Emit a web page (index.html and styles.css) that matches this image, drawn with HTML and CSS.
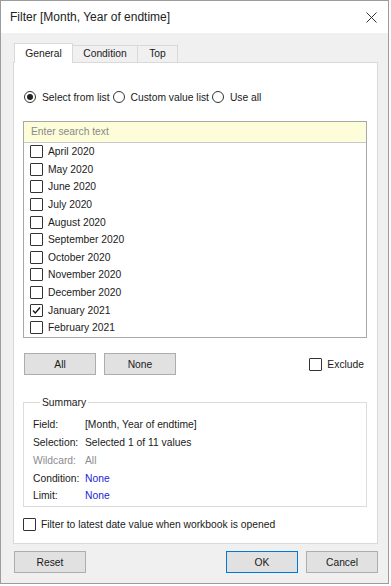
FILE: index.html
```html
<!DOCTYPE html>
<html lang="en">
<head>
	<meta charset="UTF-8">
	<title>Filter</title>
	<link rel="stylesheet" href="styles.css">
</head>
<body>
	<div class="window">
		<div class="titlebar">
			<span class="title">Filter [Month, Year of endtime]</span>
			<svg class="close" width="11" height="11" viewBox="0 0 11 11">
				<path d="M0.5 0.5 L10.5 10.5 M10.5 0.5 L0.5 10.5" stroke="#333" stroke-width="1" fill="none"/>
			</svg>
		</div>
		<div class="content">
			<div class="tabs">
				<div class="tab active">General</div>
				<div class="tab">Condition</div>
				<div class="tab">Top</div>
			</div>
			<div class="panel">
				<div class="radios">
					<label class="radio"><span class="dot on"></span>Select from list</label>
					<label class="radio"><span class="dot"></span>Custom value list</label>
					<label class="radio"><span class="dot"></span>Use all</label>
				</div>

				<div class="listbox">
					<div class="search">Enter search text</div>
					<ul class="items">
						<li><span class="check"></span>April 2020</li>
						<li><span class="check"></span>May 2020</li>
						<li><span class="check"></span>June 2020</li>
						<li><span class="check"></span>July 2020</li>
						<li><span class="check"></span>August 2020</li>
						<li><span class="check"></span>September 2020</li>
						<li><span class="check"></span>October 2020</li>
						<li><span class="check"></span>November 2020</li>
						<li><span class="check"></span>December 2020</li>
						<li><span class="check on"><svg width="11" height="11" viewBox="0 0 11 11"><path d="M2 5.5 L4.3 8 L9 2.5" stroke="#111" stroke-width="1.3" fill="none"/></svg></span>January 2021</li>
						<li><span class="check"></span>February 2021</li>
					</ul>
				</div>

				<div class="list-actions">
					<button class="btn">All</button>
					<button class="btn">None</button>
					<label class="exclude"><span class="check"></span>Exclude</label>
				</div>

				<fieldset class="summary">
					<legend>Summary</legend>
					<div class="row"><span class="key">Field:</span><span>[Month, Year of endtime]</span></div>
					<div class="row"><span class="key">Selection:</span><span>Selected 1 of 11 values</span></div>
					<div class="row muted"><span class="key">Wildcard:</span><span>All</span></div>
					<div class="row"><span class="key">Condition:</span><span class="link">None</span></div>
					<div class="row"><span class="key">Limit:</span><span class="link">None</span></div>
				</fieldset>

				<label class="latest"><span class="check"></span>Filter to latest date value when workbook is opened</label>
			</div>

			<div class="footer">
				<button class="btn">Reset</button>
				<span class="spacer"></span>
				<button class="btn default">OK</button>
				<button class="btn">Cancel</button>
			</div>
		</div>
	</div>
</body>
</html>
```

FILE: styles.css
```css
*{
	padding: 0;
	margin: 0;
	box-sizing: border-box;
}
body {
	background: #fff;
	font-family: "Liberation Sans", Arial, sans-serif;
	font-size: 10.3px;
	color: #1a1a1a;
}
ul {
	list-style: none;
}
.window {
	width: 389px;
	height: 584px;
	border: 1px solid #9c9c9c;
	background: #f0f0f0;
	display: flex;
	flex-direction: column;
}
.titlebar {
	height: 32px;
	background: #fff;
	display: flex;
	align-items: center;
	padding: 0 11px 0 9px;
}
.title {
	font-size: 12px;
	color: #222;
	flex: 1;
}
.close {
	display: block;
}
.content {
	padding: 10px 10px 0 12px;
}

/* tabs */
.tabs {
	display: flex;
	align-items: flex-end;
	height: 19px;
	padding-left: 1px;
}
.tab {
	height: 17px;
	line-height: 15px;
	padding: 0 10px;
	border: 1px solid #d9d9d9;
	border-bottom: none;
	background: #f0f0f0;
	margin-left: -1px;
	text-align: center;
}
.tab:nth-child(1) { width: 59px; }
.tab:nth-child(2) { width: 66px; }
.tab:nth-child(3) { width: 41px; }
.tab.active {
	height: 20px;
	line-height: 19px;
	background: #fff;
	position: relative;
	z-index: 1;
	margin-bottom: -1px;
	margin-left: 0;
}
.panel {
	width: 365px;
	height: 482px;
	border: 1px solid #d9d9d9;
	background: #fff;
	padding: 28px 0 0 9px;
}

/* radios */
.radios {
	display: flex;
	height: 12px;
	align-items: center;
	padding-left: 1px;
}
.radio {
	display: flex;
	align-items: center;
	margin-right: 3px;
}
.dot {
	width: 12px;
	height: 12px;
	border: 1px solid #333;
	border-radius: 50%;
	margin-right: 6px;
	display: flex;
	align-items: center;
	justify-content: center;
}
.dot.on::after {
	content: "";
	width: 6px;
	height: 6px;
	border-radius: 50%;
	background: #222;
}

/* list */
.listbox {
	margin-top: 18px;
	width: 344px;
	height: 217px;
	border: 1px solid #a8a8a8;
}
.search {
	height: 21px;
	line-height: 20px;
	background: #fdfdd9;
	border-bottom: 1px solid #c8c8c8;
	padding-left: 7px;
	color: #8a8a8a;
}
.items li {
	height: 17.6px;
	display: flex;
	align-items: center;
	padding-left: 6px;
}
.check {
	width: 13px;
	height: 13px;
	border: 1px solid #333;
	border-radius: 1px;
	background: #fff;
	margin-right: 5px;
	display: flex;
	align-items: center;
	justify-content: center;
	flex-shrink: 0;
}
.check svg {
	display: block;
}

/* buttons */
.btn {
	width: 72px;
	height: 22px;
	border: 1px solid #adadad;
	background: #e1e1e1;
	font-family: inherit;
	font-size: inherit;
	color: #1a1a1a;
}
.btn.default {
	border-color: #0078d7;
}
.list-actions {
	margin-top: 15px;
	display: flex;
	align-items: center;
	gap: 8px;
	padding-left: 1px;
}
.exclude {
	margin-left: auto;
	margin-right: 13px;
	display: flex;
	align-items: center;
}

/* summary */
.summary {
	margin-top: 22px;
	width: 344px;
	border: 1px solid #dcdcdc;
	padding: 8px 0 1px 9px;
}
.summary legend {
	margin-left: 7px;
	padding: 0 2px;
}
.row {
	height: 17.75px;
	display: flex;
	align-items: center;
}
.key {
	width: 52px;
}
.muted {
	color: #8c8c8c;
}
.link {
	color: #2323d8;
}
.latest {
	margin-top: 11px;
	display: flex;
	align-items: center;
}

/* footer */
.footer {
	margin-top: 7px;
	display: flex;
	gap: 8px;
	padding-left: 1px;
}
.spacer {
	flex: 1;
}
```
